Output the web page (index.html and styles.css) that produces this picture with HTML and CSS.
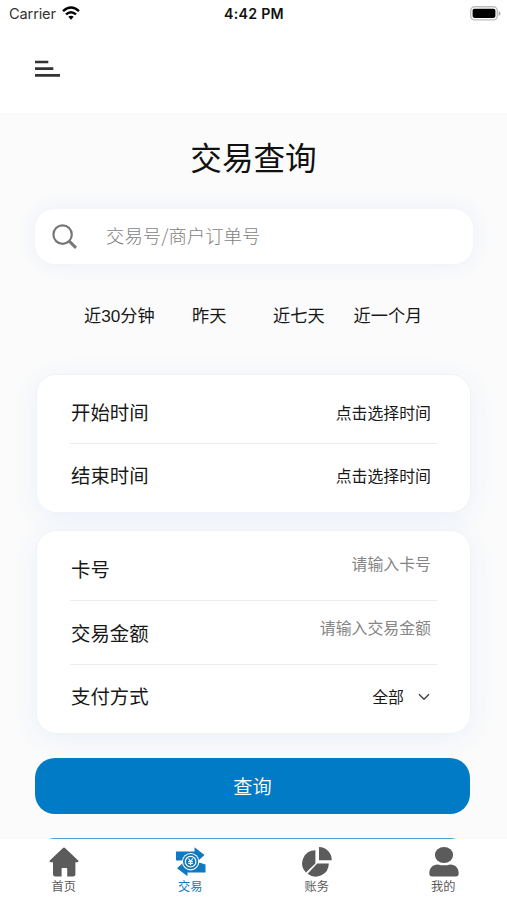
FILE: index.html
```html
<!DOCTYPE html>
<html lang="zh-CN">
<head>
<meta charset="utf-8">
<meta name="viewport" content="width=device-width">
<title>交易查询</title>
<link rel="stylesheet" href="styles.css">
</head>
<body>
<header class="status">
  <div class="carrier"><span>Carrier</span>
    <svg class="wifi" width="18" height="14" viewBox="0 0 18 14" fill="none" stroke="#000" stroke-width="2.5"><path d="M1 5.1Q9-2.1 17 5.1M4 8.4Q9 4.1 14 8.4"/><path d="M6.3 10.8Q9 8.6 11.7 10.8L9 13.8Z" fill="#000" stroke="none"/></svg>
  </div>
  <time class="clock">4:42 PM</time>
  <svg class="battery" width="31" height="15" viewBox="0 0 31 15"><rect x=".7" y=".7" width="26.6" height="13.2" rx="4" fill="#fff" stroke="#bdbdbd" stroke-width="1.4"/><rect x="2.6" y="2.7" width="22.8" height="9.2" rx="1.8"/><path d="M28.7 5v5q1.8-.8 1.8-2.5T28.7 5Z" fill="#aaa"/></svg>
</header>
<nav class="topbar">
  <svg width="26" height="18" viewBox="0 0 26 18" stroke="#333" stroke-width="2.6"><path d="M0 2h13.3M0 8.6h18.3M0 15.4h25"/></svg>
</nav>
<main class="content">
  <h1 class="title">交易查询</h1>
  <label class="search">
    <svg width="26" height="26" viewBox="0 0 26 26" fill="none" stroke="#777" stroke-width="2.2"><circle cx="10.6" cy="10.6" r="9.2"/><path d="m17.2 17.2 6.8 6.6" stroke-width="3"/></svg>
    <span class="search-text">交易号/商户订单号</span>
  </label>
  <div class="ranges"><span>近30分钟</span><span>昨天</span><span>近七天</span><span>近一个月</span></div>
  <section class="card card-time">
    <div class="row"><span class="label">开始时间</span><span class="value pick">点击选择时间</span></div>
    <div class="row"><span class="label">结束时间</span><span class="value pick">点击选择时间</span></div>
  </section>
  <section class="card card-detail">
    <div class="row"><span class="label">卡号</span><span class="value hint">请输入卡号</span></div>
    <div class="row"><span class="label">交易金额</span><span class="value hint">请输入交易金额</span></div>
    <div class="row"><span class="label">支付方式</span><span class="value select">全部
      <svg width="12" height="8" viewBox="0 0 12 8" fill="none" stroke="#444" stroke-width="1.5"><path d="m1 1.2 5 5 5-5"/></svg></span></div>
  </section>
  <button class="submit">查询</button>
  <div class="submit next"></div>
</main>
<footer class="tabs">
  <div class="tab"><svg width="30" height="30" viewBox="0 0 30 30" fill="currentColor"><path d="M14 1Q15 0 16 1L29.2 13.4Q30.2 14.8 28.4 15.2H26.4V27.6Q26.4 29.4 24.6 29.4H18.2V21.8Q18.2 21 17.4 21H13.4Q12.6 21 12.6 21.8V29.4H5.8Q4 29.4 4 27.6V15.2H1.6Q-.2 14.8.8 13.4Z"/></svg><span>首页</span></div>
  <div class="tab active"><svg width="30" height="30" viewBox="0 0 30 30"><path fill="currentColor" d="M0 4.5H18.5V.3L28.5 8 22.5 13.5H.5L0 13ZM29.5 25.5H11.5V29.2L1 21.2 7 15.8H24L29.5 17.4Z"/><circle cx="14.6" cy="14.7" r="8.7" fill="#fff"/><circle cx="14.6" cy="14.7" r="7.6" fill="currentColor"/><circle cx="14.6" cy="14.7" r="5.3" fill="none" stroke="#fff" stroke-width="1.2"/><path d="m12.4 11.5 2.2 2.8 2.2-2.8M14.6 14v4.3M12.2 14.6h4.8M12.2 16.5h4.8" fill="none" stroke="#e8f4fb" stroke-width="1.2"/></svg><span>交易</span></div>
  <div class="tab"><svg width="30" height="30" viewBox="0 0 30 30" fill="currentColor"><path d="M17 0A12.7 12.7 0 0 1 29.7 13.2H17ZM13.4 3.2V16.4L4 25.5A13.1 13.1 0 0 1 13.4 3.2ZM15.2 16.5H26.8A13.1 13.1 0 0 1 5.6 26.8Z"/></svg><span>账务</span></div>
  <div class="tab"><svg width="30" height="30" viewBox="0 0 30 30" fill="currentColor"><ellipse cx="15" cy="8" rx="9.1" ry="8"/><path d="M9 17.5Q15 19.2 21 17.5C27 17.5 29.7 21.5 29.7 26.5Q29.7 29.4 26.8 29.4H3.2Q.3 29.4.3 26.5C.3 21.5 3 17.5 9 17.5Z"/></svg><span>我的</span></div>
</footer>
</body>
</html>
```

FILE: styles.css
```css
* { box-sizing: border-box; }
body {
  margin: 0;
  width: 507px;
  height: 900px;
  overflow: hidden;
  display: flex;
  flex-direction: column;
  background: #fff;
  color: #181818;
  font-family: "Noto Sans CJK SC", sans-serif;
}
svg { display: block; flex: none; }
.status {
  height: 28px;
  display: grid;
  grid-template-columns: 1fr auto 1fr;
  align-items: center;
  padding: 0 6px 0 7px;
  font: 14.6px/28px Inter, sans-serif;
}
.carrier { display: flex; align-items: center; gap: 6px; padding-left: 2px; color: #333; letter-spacing: -.15px; }
.wifi { margin-top: -2px; }
.clock { font-weight: 600; font-size: 14.2px; letter-spacing: .25px; color: #111; }
.battery { justify-self: end; margin-top: -2px; }
.topbar { height: 85px; padding: 32px 35px; }
.content {
  height: 726px;
  overflow: hidden;
  background: #fbfbfb;
  padding: 0 35px;
  display: flex;
  flex-direction: column;
}
.title {
  margin: 22px 0 0;
  font-size: 31.6px;
  line-height: 42px;
  font-weight: 400;
  text-align: center;
  color: #111;
  flex: none;
}
.search {
  flex: none;
  width: 438px;
  height: 55px;
  margin-top: 32px;
  padding-left: 17px;
  display: flex;
  align-items: center;
  gap: 28px;
  border-radius: 20px;
  background: #fff;
  box-shadow: 0 0 22px #e9eef9;
}
.search-text { margin-top: -3px; font-size: 18.4px; line-height: 28px; font-weight: 300; color: #7f7f7f; }
.ranges {
  flex: none;
  height: 28px;
  margin: 38px 0 0 49px;
  display: grid;
  grid-template-columns: 108px 81px 80.5px auto;
  font-family: "Liberation Sans", "Noto Sans CJK SC", sans-serif;
  font-size: 17.2px;
  line-height: 28px;
  white-space: nowrap;
}
.card {
  flex: none;
  width: 435px;
  margin-left: 1px;
  padding: 0 33px;
  border-radius: 20px;
  border: 1px solid #f0f3f5;
  background: #fff;
  box-shadow: 0 5px 28px #eaf0fa;
}
.card-time { height: 139px; margin-top: 44px; padding-top: 5px; }
.card-detail { height: 204px; margin-top: 17px; padding-top: 6px; }
.row {
  height: 64px;
  display: flex;
  align-items: center;
  justify-content: space-between;
  padding: 0 6px 0 1px;
  border-bottom: 1px solid #e9ebed;
}
.row:last-child { height: 62px; border-bottom: 0; }
.label { font-size: 19.4px; line-height: 28px; }
.value { font-size: 15.9px; line-height: 24px; }
.pick { margin-top: 2px; }
.hint { color: #858585; margin-top: -9px; }
.select { display: flex; align-items: center; gap: 14px; padding-right: 1px; margin-top: 2px; }
.submit {
  flex: none;
  width: 435px;
  height: 56px;
  margin-top: 24px;
  padding: 0;
  border: 0;
  border-radius: 20px;
  background: #017bc5;
  color: #fff;
  font: 350 19.2px/54px "Noto Sans CJK SC", sans-serif;
}
.next { margin-top: 23.5px; opacity: .7; }
.tabs {
  height: 61px;
  display: grid;
  grid-template-columns: repeat(4, 126.5px);
  padding-left: 1px;
  background: #fff;
  color: #5b5b5b;
}
.tab { display: flex; flex-direction: column; align-items: center; padding-top: 8px; font-size: 12.2px; line-height: 18px; }
.tab span { margin-left: -1px; }
.active { color: #1279bf; }
```
